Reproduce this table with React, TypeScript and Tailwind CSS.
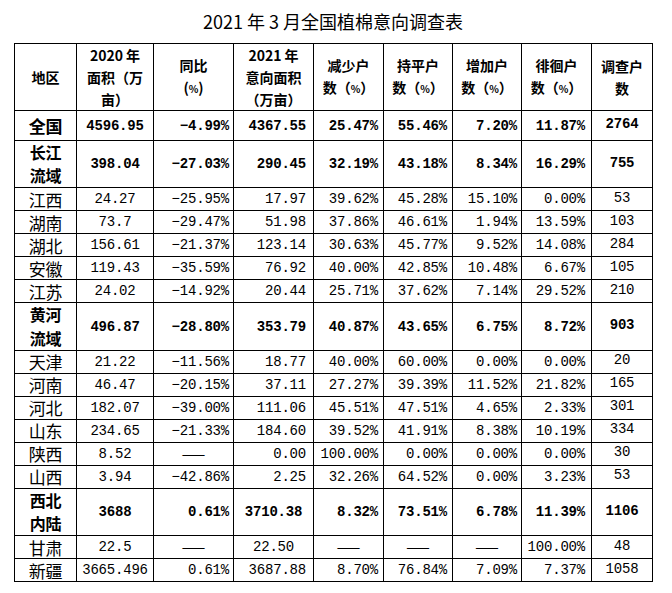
type Row = {
  name: string;
  sub?: string;
  bold?: boolean;
  area20: string;
  yoy: string;
  area21: string;
  dec: string;
  flat: string;
  inc: string;
  wait: string;
  n: string;
  center4?: boolean;
};

const rows: Row[] = [
  { name: "全国", bold: true, area20: "4596.95", yoy: "−4.99%", area21: "4367.55", dec: "25.47%", flat: "55.46%", inc: "7.20%", wait: "11.87%", n: "2764" },
  { name: "长江", sub: "流域", bold: true, area20: "398.04", yoy: "−27.03%", area21: "290.45", dec: "32.19%", flat: "43.18%", inc: "8.34%", wait: "16.29%", n: "755" },
  { name: "江西", area20: "24.27", yoy: "−25.95%", area21: "17.97", dec: "39.62%", flat: "45.28%", inc: "15.10%", wait: "0.00%", n: "53" },
  { name: "湖南", area20: "73.7", yoy: "−29.47%", area21: "51.98", dec: "37.86%", flat: "46.61%", inc: "1.94%", wait: "13.59%", n: "103" },
  { name: "湖北", area20: "156.61", yoy: "−21.37%", area21: "123.14", dec: "30.63%", flat: "45.77%", inc: "9.52%", wait: "14.08%", n: "284" },
  { name: "安徽", area20: "119.43", yoy: "−35.59%", area21: "76.92", dec: "40.00%", flat: "42.85%", inc: "10.48%", wait: "6.67%", n: "105" },
  { name: "江苏", area20: "24.02", yoy: "−14.92%", area21: "20.44", dec: "25.71%", flat: "37.62%", inc: "7.14%", wait: "29.52%", n: "210" },
  { name: "黄河", sub: "流域", bold: true, area20: "496.87", yoy: "−28.80%", area21: "353.79", dec: "40.87%", flat: "43.65%", inc: "6.75%", wait: "8.72%", n: "903" },
  { name: "天津", area20: "21.22", yoy: "−11.56%", area21: "18.77", dec: "40.00%", flat: "60.00%", inc: "0.00%", wait: "0.00%", n: "20" },
  { name: "河南", area20: "46.47", yoy: "−20.15%", area21: "37.11", dec: "27.27%", flat: "39.39%", inc: "11.52%", wait: "21.82%", n: "165" },
  { name: "河北", area20: "182.07", yoy: "−39.00%", area21: "111.06", dec: "45.51%", flat: "47.51%", inc: "4.65%", wait: "2.33%", n: "301" },
  { name: "山东", area20: "234.65", yoy: "−21.33%", area21: "184.60", dec: "39.52%", flat: "41.91%", inc: "8.38%", wait: "10.19%", n: "334" },
  { name: "陕西", area20: "8.52", yoy: "——", area21: "0.00", dec: "100.00%", flat: "0.00%", inc: "0.00%", wait: "0.00%", n: "30" },
  { name: "山西", area20: "3.94", yoy: "−42.86%", area21: "2.25", dec: "32.26%", flat: "64.52%", inc: "0.00%", wait: "3.23%", n: "53" },
  { name: "西北", sub: "内陆", bold: true, area20: "3688", yoy: "0.61%", area21: "3710.38", dec: "8.32%", flat: "73.51%", inc: "6.78%", wait: "11.39%", n: "1106", center4: true },
  { name: "甘肃", area20: "22.5", yoy: "——", area21: "22.50", dec: "——", flat: "——", inc: "——", wait: "100.00%", n: "48", center4: true },
  { name: "新疆", area20: "3665.496", yoy: "0.61%", area21: "3687.88", dec: "8.70%", flat: "76.84%", inc: "7.09%", wait: "7.37%", n: "1058" },
];

const cell = "border border-black p-0";
const num = "font-['Liberation_Mono','Noto_Sans_CJK_SC',monospace] text-[14px] tracking-[-0.2px]";

function Pct() {
  return <span className="text-[10px]">%</span>;
}

function Val({ v, pr, center }: { v: string; pr: string; center?: boolean }) {
  const dash = v === "——";
  return (
    <td className={`${cell} ${dash || center ? "text-center" : `text-right ${pr}`}`}>
      {dash ? <span className="font-['Noto_Sans_CJK_SC',sans-serif] text-[14px] leading-[18px]">——</span> : v}
    </td>
  );
}

export default function App() {
  return (
    <div className="min-h-[593px] w-[672px] bg-white text-black font-['Noto_Sans_CJK_SC',sans-serif]">
      <div className="ml-[14px] w-[638px]">
        <div className="h-[43px] pt-[9px] text-center text-[18px] leading-[24px]">
          2021 年 3 月全国植棉意向调查表
        </div>
        <table className="w-[638px] table-fixed border-collapse">
          <colgroup>
            <col className="w-[62px]" />
            <col className="w-[77px]" />
            <col className="w-[80px]" />
            <col className="w-[80px]" />
            <col className="w-[70px]" />
            <col className="w-[69px]" />
            <col className="w-[69px]" />
            <col className="w-[70px]" />
            <col className="w-[61px]" />
          </colgroup>
          <thead>
            <tr className="h-[67px] text-center text-[14px] font-semibold leading-[22px]">
              <th className={cell}>地区</th>
              <th className={cell}>
                2020 年<br />面积（万<br />亩）
              </th>
              <th className={cell}>
                同比<br />(<Pct />)
              </th>
              <th className={cell}>
                2021 年<br />意向面积<br />（万亩）
              </th>
              <th className={cell}>
                减少户<br />数（<Pct />）
              </th>
              <th className={cell}>
                持平户<br />数（<Pct />）
              </th>
              <th className={cell}>
                增加户<br />数（<Pct />）
              </th>
              <th className={cell}>
                徘徊户<br />数（<Pct />）
              </th>
              <th className={cell}>
                调查户<br />数
              </th>
            </tr>
          </thead>
          <tbody>
            {rows.map((r) => {
              const h = r.sub ? "h-[46px]" : r.bold ? "h-[30px]" : "h-[23px]";
              return (
                <tr key={r.name} className={`${h} ${num} ${r.bold ? "font-bold" : "font-normal"} leading-[18px]`}>
                  <td
                    className={`${cell} text-center font-['Noto_Sans_CJK_SC',sans-serif] ${
                      r.sub ? "text-[16px] leading-[23.2px]" : "text-[17px] leading-[21px]"
                    }`}
                  >
                    {r.name}
                    {r.sub && (
                      <>
                        <br />
                        {r.sub}
                      </>
                    )}
                  </td>
                  <td className={`${cell} text-center`}>{r.area20}</td>
                  <Val v={r.yoy} pr="pr-[4px]" />
                  <Val v={r.area21} pr="pr-[7px]" center={r.center4} />
                  <Val v={r.dec} pr="pr-[5px]" />
                  <Val v={r.flat} pr="pr-[5px]" />
                  <Val v={r.inc} pr="pr-[4px]" />
                  <Val v={r.wait} pr="pr-[6px]" />
                  <td className={`${cell} pb-[3px] text-center`}>{r.n}</td>
                </tr>
              );
            })}
          </tbody>
        </table>
      </div>
    </div>
  );
}
